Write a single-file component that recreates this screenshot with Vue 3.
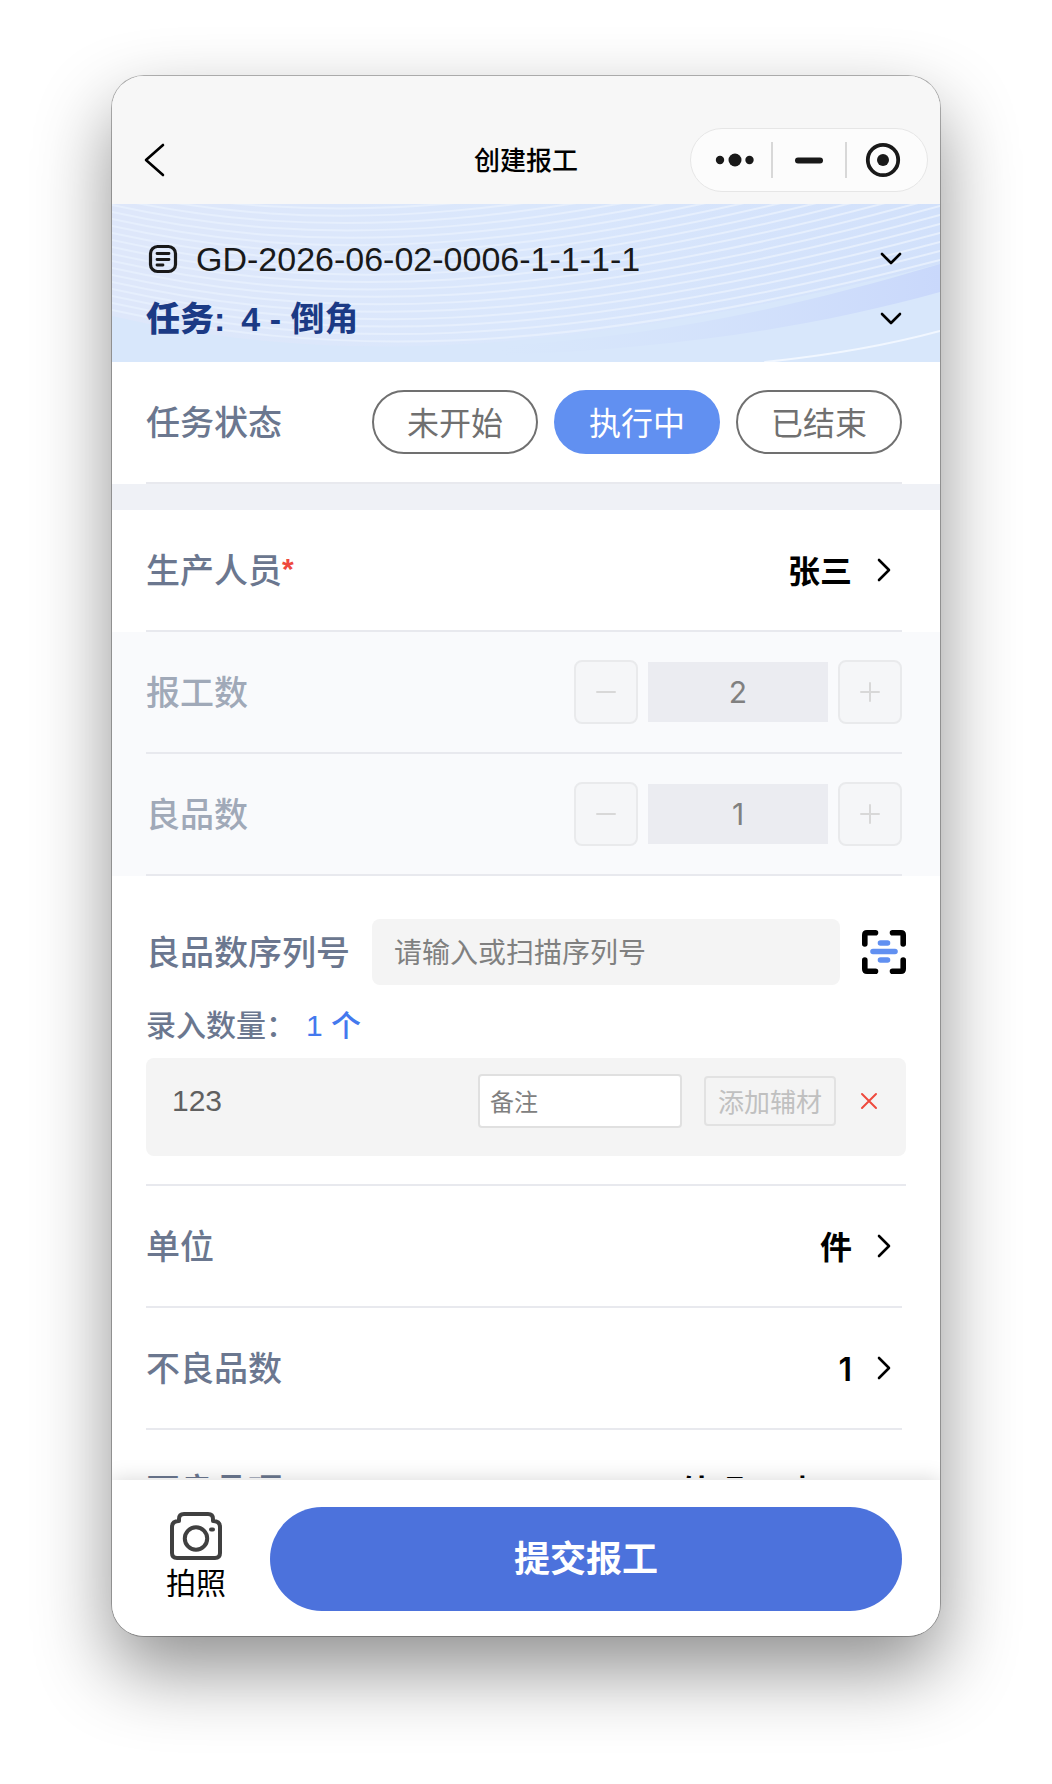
<script setup>
import { ref } from 'vue'

const statuses = ['未开始', '执行中', '已结束']
const status = ref('执行中')
const steppers = [
  { id: 'report-count', label: '报工数', value: '2' },
  { id: 'good-count', label: '良品数', value: '1' },
]
const links = [
  { label: '单位', value: '件' },
  { label: '不良品数', value: '1' },
  { label: '不良品项', value: '外观不对 ×1' },
]
const serial = ref('')
const remark = ref('')

// Each wave is the same curve shifted upwards, getting steeper on the right.
const waves = Array.from({ length: 26 }, (_, i) => {
  const y = 106 - i * 7
  return `M0 ${y} C200 ${y + 44} 430 ${y + 54 - i} 828 ${56 - i * 9}`
})
</script>

<template>
  <div class="page">
    <div class="phone">
      <header class="nav">
        <button class="back" type="button" aria-label="返回">
          <svg width="24" height="36" viewBox="0 0 24 36"><path d="M21 3 4 18l17 15" /></svg>
        </button>
        <h1>创建报工</h1>
        <div class="capsule">
          <button type="button" aria-label="更多">
            <svg width="40" height="36" viewBox="0 0 40 36">
              <circle cx="5" cy="18" r="4.2" /><circle cx="20" cy="18" r="6.5" /><circle cx="34.5" cy="18" r="4.2" />
            </svg>
          </button>
          <button type="button" aria-label="最小化">
            <svg width="40" height="36" viewBox="0 0 40 36"><rect x="6" y="15.5" width="28" height="6" rx="3" /></svg>
          </button>
          <button type="button" aria-label="关闭">
            <svg width="36" height="36" viewBox="0 0 36 36">
              <circle cx="18" cy="18" r="15.2" fill="none" stroke="#191919" stroke-width="3.8" /><circle cx="18" cy="18" r="6" />
            </svg>
          </button>
        </div>
      </header>

      <main class="content">
        <section class="banner">
          <svg class="waves" viewBox="0 0 828 158" preserveAspectRatio="none" aria-hidden="true">
            <defs>
              <linearGradient id="sky" x1="0" y1="0" x2="1" y2="0">
                <stop offset="0" stop-color="#dee7fa" /><stop offset="0.5" stop-color="#dae7fc" /><stop offset="1" stop-color="#d2e1fb" />
              </linearGradient>
              <linearGradient id="band" x1="0" y1="0" x2="1" y2="0">
                <stop offset="0.3" stop-color="#d3e0fb" stop-opacity="0" /><stop offset="1" stop-color="#c9d8fb" />
              </linearGradient>
            </defs>
            <rect width="828" height="158" fill="url(#sky)" />
            <path d="M0 112C200 158 430 160 828 60V158H0Z" fill="#d8e7fb" />
            <path d="M200 144C430 150 600 128 828 60V88C640 140 450 156 200 154Z" fill="url(#band)" />
            <path v-for="d in waves" :key="d" :d="d" class="wave" />
            <path d="M653 158Q750 148 828 127" class="crest" />
          </svg>
          <button class="pick order" type="button">
            <svg width="34" height="34" viewBox="0 0 34 34" class="doc">
              <rect x="4.5" y="4.5" width="25" height="25" rx="7" /><path d="M11 11.5h12M11 17.5h12M11 23h6" />
            </svg>
            <span>GD-2026-06-02-0006-1-1-1-1</span>
            <svg class="down" width="24" height="16" viewBox="0 0 24 16"><path d="m4 3 9 9 9-9" /></svg>
          </button>
          <button class="pick task" type="button">
            <b>任务:</b>
            <span>4 - 倒角</span>
            <svg class="down" width="24" height="16" viewBox="0 0 24 16"><path d="m4 3 9 9 9-9" /></svg>
          </button>
        </section>

        <section class="row">
          <div class="line">
            <span class="label">任务状态</span>
            <div class="statuses">
              <button v-for="s in statuses" :key="s" type="button" class="status" :class="{ active: s === status }" @click="status = s">{{ s }}</button>
            </div>
          </div>
        </section>
        <div class="divider"></div>

        <section class="row">
          <div class="line">
            <span class="label">生产人员<b class="required">*</b></span>
            <button class="value" type="button">
              <span>张三</span>
              <svg class="next" width="32" height="32" viewBox="0 0 32 32"><path d="m9 6 10 10L9 26" /></svg>
            </button>
          </div>
        </section>

        <section v-for="s in steppers" :key="s.id" class="row disabled">
          <div class="line">
            <label class="label" :for="s.id">{{ s.label }}</label>
            <div class="stepper">
              <button type="button" disabled aria-label="减少">
                <svg width="24" height="24" viewBox="0 0 24 24"><path d="M3 12h18" /></svg>
              </button>
              <input :id="s.id" type="text" :value="s.value" disabled />
              <button type="button" disabled aria-label="增加">
                <svg width="24" height="24" viewBox="0 0 24 24"><path d="M3 12h18M12 3v18" /></svg>
              </button>
            </div>
          </div>
        </section>

        <section class="serials">
          <div class="entry">
            <label class="label" for="serial">良品数序列号</label>
            <input id="serial" v-model="serial" type="text" placeholder="请输入或扫描序列号" />
            <button class="scan" type="button" aria-label="扫描">
              <svg width="44" height="44" viewBox="0 0 44 44">
                <path class="corner" d="M2.8 14V5q0-2.2 2.2-2.2h8.5M30.5 2.8H39q2.2 0 2.2 2.2v9M41.2 30v9q0 2.2-2.2 2.2h-8.5M13.5 41.2H5q-2.2 0-2.2-2.2v-9" />
                <path class="beam" d="M18.5 13h7M11 21.5h22M18.5 30h7" />
              </svg>
            </button>
          </div>
          <p class="count">录入数量：<span>1 个</span></p>
          <div class="item">
            <span class="code">123</span>
            <input v-model="remark" type="text" placeholder="备注" aria-label="备注" />
            <button class="material" type="button" disabled>添加辅材</button>
            <button class="remove" type="button" aria-label="删除">
              <svg width="22" height="22" viewBox="0 0 22 22"><path d="m4 4 14 14M18 4 4 18" /></svg>
            </button>
          </div>
        </section>

        <section v-for="l in links" :key="l.label" class="row">
          <div class="line">
            <span class="label">{{ l.label }}</span>
            <button class="value" type="button">
              <span>{{ l.value }}</span>
              <svg class="next" width="32" height="32" viewBox="0 0 32 32"><path d="m9 6 10 10L9 26" /></svg>
            </button>
          </div>
        </section>
      </main>

      <footer class="actions">
        <button class="photo" type="button">
          <svg width="52" height="48" viewBox="0 0 52 48">
            <path d="M9 9V7q0-5 5-5h24q5 0 5 5v2q7 0 7 6v26q0 5-5 5H7q-5 0-5-5V15q0-6 7-6Z" />
            <circle cx="26" cy="26.5" r="11.2" /><path d="M41 17.5h2" />
          </svg>
          拍照
        </button>
        <button class="submit" type="button">提交报工</button>
      </footer>
    </div>
  </div>
</template>

<style>
body {
  margin: 0;
  background: #fff;
}
</style>

<style scoped>
.page {
  box-sizing: border-box;
  height: 100vh;
  padding: 76px 112px 148px;
  font-family: "Liberation Sans", "Noto Sans CJK SC", sans-serif;
  color: #000;
}
button,
input {
  box-sizing: border-box;
  margin: 0;
  padding: 0;
  border: 0;
  background: none;
  font: inherit;
  color: inherit;
}
svg {
  display: block;
  flex: none;
}
svg path {
  fill: none;
  stroke: currentColor;
  stroke-width: 2;
  stroke-linecap: round;
  stroke-linejoin: round;
}
.phone {
  display: flex;
  flex-direction: column;
  height: 100%;
  border-radius: 32px;
  overflow: hidden;
  background: #fff;
  box-shadow: 0 0 0 1px rgba(0, 0, 0, 0.28), 0 34px 76px rgba(0, 0, 0, 0.44);
}
.nav {
  display: grid;
  grid-template-columns: 1fr auto 1fr;
  align-items: center;
  padding: 52px 12px 12px 30px;
  background: #f7f7f7;
}
.back {
  justify-self: start;
}
.back path {
  stroke-width: 2.6;
}
h1 {
  margin: 0 18px 0 0;
  padding-top: 2px;
  font-size: 26px;
  font-weight: 500;
  line-height: 40px;
}
.capsule {
  box-sizing: border-box;
  justify-self: end;
  display: flex;
  align-items: center;
  width: 238px;
  height: 64px;
  border: 1px solid #e6e6e6;
  border-radius: 32px;
  background: #fcfcfc;
}
.capsule button {
  display: flex;
  flex: 1;
  justify-content: center;
  height: 36px;
}
.capsule button + button {
  border-left: 2px solid #d8d8d8;
}
.capsule button:first-child {
  padding-left: 8px;
}
.capsule button:last-child {
  padding-right: 8px;
}
.capsule svg {
  fill: #191919;
}
.content {
  flex: 1;
  min-height: 0;
  overflow-y: auto;
  scrollbar-width: none;
}
.banner {
  position: relative;
  padding: 26px 38px 12px 34px;
}
.waves {
  position: absolute;
  inset: 0;
  width: 100%;
  height: 100%;
}
.waves path {
  stroke: none;
}
.waves path:not(.wave, .crest) {
  fill: revert-layer;
}
.waves .wave {
  stroke: #e6effd;
  stroke-width: 2;
}
.waves .crest {
  stroke: #f1f7ff;
  stroke-width: 2;
}
.pick {
  position: relative;
  display: flex;
  align-items: center;
  gap: 16px;
  width: 100%;
  height: 60px;
  padding-bottom: 2px;
  font-size: 34px;
  text-align: left;
}
.pick span {
  flex: 1;
}
.order {
  color: #191919;
}
.doc rect {
  fill: none;
  stroke: currentColor;
  stroke-width: 3.2;
}
.doc path {
  stroke-width: 2.8;
}
.task {
  font-weight: 700;
  line-height: 44px;
  color: #1b3a85;
}
.down {
  color: #000;
}
.down path {
  stroke-width: 2.6;
}
.row {
  padding: 0 38px 0 34px;
}
.line {
  display: flex;
  align-items: center;
  justify-content: space-between;
  height: 120px;
  border-bottom: 2px solid #e8e9ee;
}
.label {
  padding-top: 2px;
  font-size: 34px;
  font-weight: 500;
  line-height: 48px;
  white-space: nowrap;
  color: #6b778f;
}
.required {
  font-size: 30px;
  line-height: 30px;
  vertical-align: 4px;
  color: #ee4a3e;
}
.statuses {
  display: flex;
  gap: 16px;
}
.status {
  width: 166px;
  height: 64px;
  padding-bottom: 2px;
  border: 2px solid #707070;
  border-radius: 32px;
  font-size: 32px;
  color: #707070;
}
.status.active {
  border-color: #6190f1;
  background: #6190f1;
  color: #fff;
}
.divider {
  height: 26px;
  background: #eff1f6;
}
.value {
  display: flex;
  align-items: center;
  gap: 18px;
  font-family: Inter, "Noto Sans CJK SC", sans-serif;
  font-size: 32px;
  font-weight: 600;
  line-height: 48px;
}
.value span {
  padding-top: 4px;
}
.next path {
  stroke-width: 2.6;
}
.disabled {
  background: #f9fafc;
}
.disabled .label {
  color: #a0a9b8;
}
.stepper {
  display: flex;
  align-items: center;
  gap: 10px;
}
.stepper button {
  display: grid;
  place-items: center;
  width: 64px;
  height: 64px;
  border: 2px solid #e9eaec;
  border-radius: 8px;
  background: #f5f6f8;
  color: #d8d8d8;
}
.stepper input {
  width: 180px;
  height: 60px;
  background: #ebecf1;
  font-family: Inter, sans-serif;
  font-size: 30px;
  text-align: center;
  color: #808080;
}
.serials {
  margin: 0 34px;
  padding: 43px 0 28px;
  border-bottom: 2px solid #e8e9ee;
}
.entry {
  display: flex;
  align-items: center;
  gap: 22px;
}
.entry input {
  flex: 1;
  min-width: 0;
  height: 66px;
  padding: 4px 22px 0;
  border-radius: 8px;
  background: #f4f4f4;
  font-size: 28px;
}
input::placeholder {
  color: #808080;
  opacity: 1;
}
.scan .corner {
  stroke: #000;
  stroke-width: 5.6;
}
.scan .beam {
  stroke: #6190f1;
  stroke-width: 5.6;
}
.count {
  margin: 19px 0 10px;
  font-size: 30px;
  font-weight: 500;
  line-height: 44px;
  color: #6b778f;
}
.count span {
  margin-left: 10px;
  color: #4479ee;
}
.item {
  display: flex;
  align-items: center;
  gap: 22px;
  padding: 16px 26px 28px;
  border-radius: 8px;
  background: #f4f4f4;
}
.code {
  flex: 1;
  font-size: 30px;
  color: #606060;
}
.item input {
  width: 204px;
  height: 54px;
  padding: 4px 10px 0;
  border: 2px solid #e0e0e0;
  border-radius: 4px;
  background: #fff;
  font-size: 24px;
}
.material {
  width: 132px;
  height: 50px;
  padding-bottom: 2px;
  border: 2px solid #e2e2e2;
  border-radius: 4px;
  font-size: 26px;
  color: #c0c0c0;
}
.remove {
  color: #ee4a3e;
}
.actions {
  position: relative;
  display: flex;
  align-items: center;
  gap: 24px;
  margin-top: 2px;
  padding: 27px 38px 25px 34px;
  background: #fff;
  box-shadow: 0 0 20px rgba(0, 0, 0, 0.16);
}
.photo {
  display: flex;
  flex-direction: column;
  align-items: center;
  gap: 2px;
  width: 100px;
  font-size: 30px;
  line-height: 44px;
}
.photo svg {
  color: #404040;
}
.photo path,
.photo circle {
  fill: none;
  stroke: currentColor;
  stroke-width: 4;
}
.submit {
  flex: 1;
  height: 104px;
  padding-bottom: 6px;
  border-radius: 52px;
  background: #4c72dc;
  font-size: 36px;
  font-weight: 700;
  color: #fff;
}
</style>
